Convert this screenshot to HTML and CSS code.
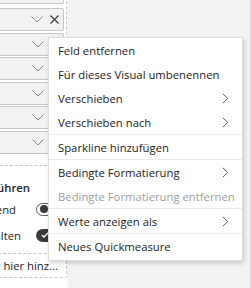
FILE: index.html
```html
<!DOCTYPE html>
<html lang="de">
<head>
<meta charset="UTF-8" />
<meta name="viewport" content="width=device-width, initial-scale=1" />
<title>Felder – Kontextmenü</title>
<link rel="stylesheet" href="styles.css">
</head>
<body>

<div class="screen">
  <aside class="pane">
    <div class="well">
      <div class="field first"></div>
      <div class="field">
        <svg class="chev" width="12" height="7" viewBox="0 0 12 7"><path d="M0.5 0.5 L6 6 L11.5 0.5" /></svg>
        <svg class="close" width="9" height="9" viewBox="0 0 9 9"><path d="M0.5 0.5 L8.5 8.5 M8.5 0.5 L0.5 8.5" /></svg>
      </div>
      <div class="field"><svg class="chev" width="12" height="7" viewBox="0 0 12 7"><path d="M0.5 0.5 L6 6 L11.5 0.5" /></svg><span class="spacer"></span></div>
      <div class="field"><svg class="chev" width="12" height="7" viewBox="0 0 12 7"><path d="M0.5 0.5 L6 6 L11.5 0.5" /></svg><span class="spacer"></span></div>
      <div class="field"><svg class="chev" width="12" height="7" viewBox="0 0 12 7"><path d="M0.5 0.5 L6 6 L11.5 0.5" /></svg><span class="spacer"></span></div>
      <div class="field"><svg class="chev" width="12" height="7" viewBox="0 0 12 7"><path d="M0.5 0.5 L6 6 L11.5 0.5" /></svg><span class="spacer"></span></div>
      <div class="field"><svg class="chev" width="12" height="7" viewBox="0 0 12 7"><path d="M0.5 0.5 L6 6 L11.5 0.5" /></svg><span class="spacer"></span></div>
    </div>

    <section class="drill">
      <div class="clip title-clip"><span>Drillthrough ausführen</span></div>
      <div class="opt">
        <div class="clip opt1-clip"><span>Seitenübergreifend</span></div>
        <span class="toggle off"><span class="knob"></span></span>
      </div>
      <div class="opt">
        <div class="clip opt2-clip"><span>Alle Filter beibehalten</span></div>
        <span class="toggle on">
          <svg class="tick" width="8" height="6" viewBox="0 0 8 6"><path d="M0.8 3 L3 5 L7.2 0.8" /></svg>
        </span>
      </div>
      <div class="drop">
        <div class="clip drop-clip"><span>Drillthrough-Felder hier hinz...</span></div>
      </div>
    </section>
  </aside>

  <main class="canvas"></main>

  <ul class="menu">
    <li>Feld entfernen</li>
    <li>Für dieses Visual umbenennen</li>
    <li class="sub">Verschieben <svg width="7" height="11" viewBox="0 0 7 11"><path d="M0.8 0.8 L5.8 5.5 L0.8 10.2" /></svg></li>
    <li class="sub">Verschieben nach <svg width="7" height="11" viewBox="0 0 7 11"><path d="M0.8 0.8 L5.8 5.5 L0.8 10.2" /></svg></li>
    <li class="sep"></li>
    <li>Sparkline hinzufügen</li>
    <li class="sep"></li>
    <li class="sub">Bedingte Formatierung <svg width="7" height="11" viewBox="0 0 7 11"><path d="M0.8 0.8 L5.8 5.5 L0.8 10.2" /></svg></li>
    <li class="disabled">Bedingte Formatierung entfernen</li>
    <li class="sep"></li>
    <li class="sub">Werte anzeigen als <svg width="7" height="11" viewBox="0 0 7 11"><path d="M0.8 0.8 L5.8 5.5 L0.8 10.2" /></svg></li>
    <li class="sep"></li>
    <li>Neues Quickmeasure</li>
  </ul>
</div>

</body>
</html>
```

FILE: styles.css
```css
body { margin: 0; font-family: "Segoe UI", "Open Sans", sans-serif; font-size: 11.3px; color: #252423; background: #f3f2f1; }
.screen { position: relative; display: flex; width: 251px; height: 288px; overflow: hidden; }

.pane { width: 67px; background: #fff; flex: none; }
.well { border-right: 1px dashed #c8c6c4; border-bottom: 1px dashed #c8c6c4; padding: 0 2px 10px 0; }
.field { display: flex; align-items: center; justify-content: flex-end; height: 23px; margin: 0 0 1.5px -4px; padding-right: 4px; box-sizing: border-box; background: #f3f2f1; border: 1px solid #c8c6c4; border-radius: 2px; gap: 7px; }
.field.first { margin-top: -19px; margin-bottom: 4px; }
.field .spacer { width: 8px; }
.chev path { fill: none; stroke: #7a8ea3; stroke-width: 1; }
.close path { fill: none; stroke: #3b3a39; stroke-width: 1.1; }

.drill { padding-top: 14px; }
.clip { display: flex; justify-content: flex-end; overflow: hidden; white-space: nowrap; flex: none; }
.title-clip { width: 30px; font-weight: 600; line-height: 16px; }
.opt { display: flex; align-items: center; height: 26px; }
.opt:first-of-type { margin-top: 5px; }
.opt1-clip { width: 16px; margin-right: 20px; }
.opt2-clip { width: 21px; margin-right: 15px; }
.toggle { display: flex; align-items: center; width: 32px; height: 13px; border-radius: 7px; box-sizing: border-box; flex: none; }
.toggle.off { border: 1px solid #605e5c; padding-left: 3px; }
.toggle.off .knob { width: 8px; height: 8px; border-radius: 50%; background: #3b3a39; }
.toggle.on { background: #3b3a39; justify-content: flex-start; padding-left: 5px; }
.tick path { fill: none; stroke: #fff; stroke-width: 1.3; }

.drop { margin: 5px 0 0 -4px; height: 25px; box-sizing: border-box; border: 1px dashed #c8c6c4; border-radius: 2px; display: flex; align-items: center; justify-content: flex-end; padding-right: 8px; }
.drop-clip { width: 62px; }

.canvas { flex: 1; border-right: 1px solid #e1dfdd; }

.menu { position: absolute; left: 48px; top: 37px; width: 195px; margin: 0; padding: 0 0 2px; list-style: none; background: #fff; border: 1px solid #e1dfdd; box-sizing: border-box; box-shadow: 1px 2px 4px rgba(0, 0, 0, 0.18); }
.menu li { display: flex; align-items: center; justify-content: space-between; height: 24px; padding: 0 13px 0 9px; white-space: nowrap; }
.menu li svg path { fill: none; stroke: #605e5c; stroke-width: 1; }
.menu li.sep { height: 1px; padding: 0; background: #edebe9; }
.menu li.disabled { color: #a19f9d; }
```
